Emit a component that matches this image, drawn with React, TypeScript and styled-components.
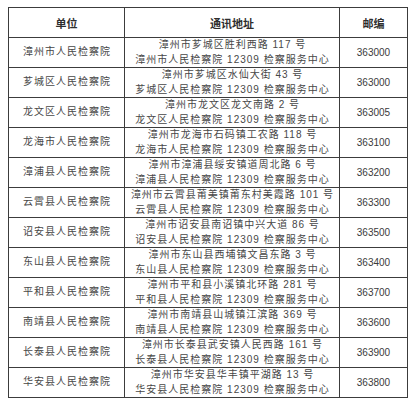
import React from 'react';
import styled, { createGlobalStyle } from 'styled-components';

const GlobalStyle = createGlobalStyle`
    html, body {
        margin: 0;
        padding: 0;
        background: #ffffff;
    }
`;

const rows = [
    { unit: '漳州市人民检察院', addr: '漳州市芗城区胜利西路 117 号', code: '363000' },
    { unit: '芗城区人民检察院', addr: '漳州市芗城区水仙大街 43 号', code: '363000' },
    { unit: '龙文区人民检察院', addr: '漳州市龙文区龙文南路 2 号', code: '363005' },
    { unit: '龙海市人民检察院', addr: '漳州市龙海市石码镇工农路 118 号', code: '363100' },
    { unit: '漳浦县人民检察院', addr: '漳州市漳浦县绥安镇道周北路 6 号', code: '363200' },
    { unit: '云霄县人民检察院', addr: '漳州市云霄县莆美镇莆东村美霞路 101 号', code: '363300' },
    { unit: '诏安县人民检察院', addr: '漳州市诏安县南诏镇中兴大道 86 号', code: '363500' },
    { unit: '东山县人民检察院', addr: '漳州市东山县西埔镇文昌东路 3 号', code: '363400' },
    { unit: '平和县人民检察院', addr: '漳州市平和县小溪镇北环路 281 号', code: '363700' },
    { unit: '南靖县人民检察院', addr: '漳州市南靖县山城镇江滨路 369 号', code: '363600' },
    { unit: '长泰县人民检察院', addr: '漳州市长泰县武安镇人民西路 161 号', code: '363900' },
    { unit: '华安县人民检察院', addr: '漳州市华安县华丰镇平湖路 13 号', code: '363800' },
];

export default function App() {
    return (
        <Page>
            <GlobalStyle />
            <Table>
                <colgroup>
                    <col style={{ width: 116 }} />
                    <col style={{ width: 215 }} />
                    <col style={{ width: 68 }} />
                </colgroup>
                <thead>
                    <HeadRow>
                        <Th>单位</Th>
                        <Th>通讯地址</Th>
                        <Th>邮编</Th>
                    </HeadRow>
                </thead>
                <tbody>
                    {rows.map((r, i) => (
                        <Row key={i}>
                            <Cell>{r.unit}</Cell>
                            <Cell>
                                <Line>{r.addr}</Line>
                                <Line>{r.unit} 12309 检察服务中心</Line>
                            </Cell>
                            <Code>{r.code}</Code>
                        </Row>
                    ))}
                </tbody>
            </Table>
        </Page>
    );
}

const Page = styled.div`
    padding: 7px 8px 0 8px;
`;

const Table = styled.table`
    width: 399px;
    table-layout: fixed;
    border-collapse: collapse;
    font-family: "Liberation Sans", "Noto Sans CJK SC", sans-serif;
    color: #474747;
`;

const HeadRow = styled.tr`
    height: 30px;
`;

const Row = styled.tr`
    height: 29.5px;
`;

const Th = styled.th`
    border: 1px solid #3c3c3c;
    padding: 0;
    font-size: 11px;
    font-weight: 700;
    color: #2e2e2e;
    text-align: center;
    vertical-align: middle;
`;

const Cell = styled.td`
    border: 1px solid #3c3c3c;
    padding: 0 0 0 1px;
    font-size: 10px;
    letter-spacing: 1px;
    line-height: 14.5px;
    text-align: center;
    vertical-align: middle;
    white-space: nowrap;
`;

const Line = styled.div`
    line-height: 14.5px;
`;

const Code = styled.td`
    border: 1px solid #3c3c3c;
    padding: 0;
    font-size: 10px;
    color: #3a3a3a;
    text-align: center;
    vertical-align: middle;
`;
